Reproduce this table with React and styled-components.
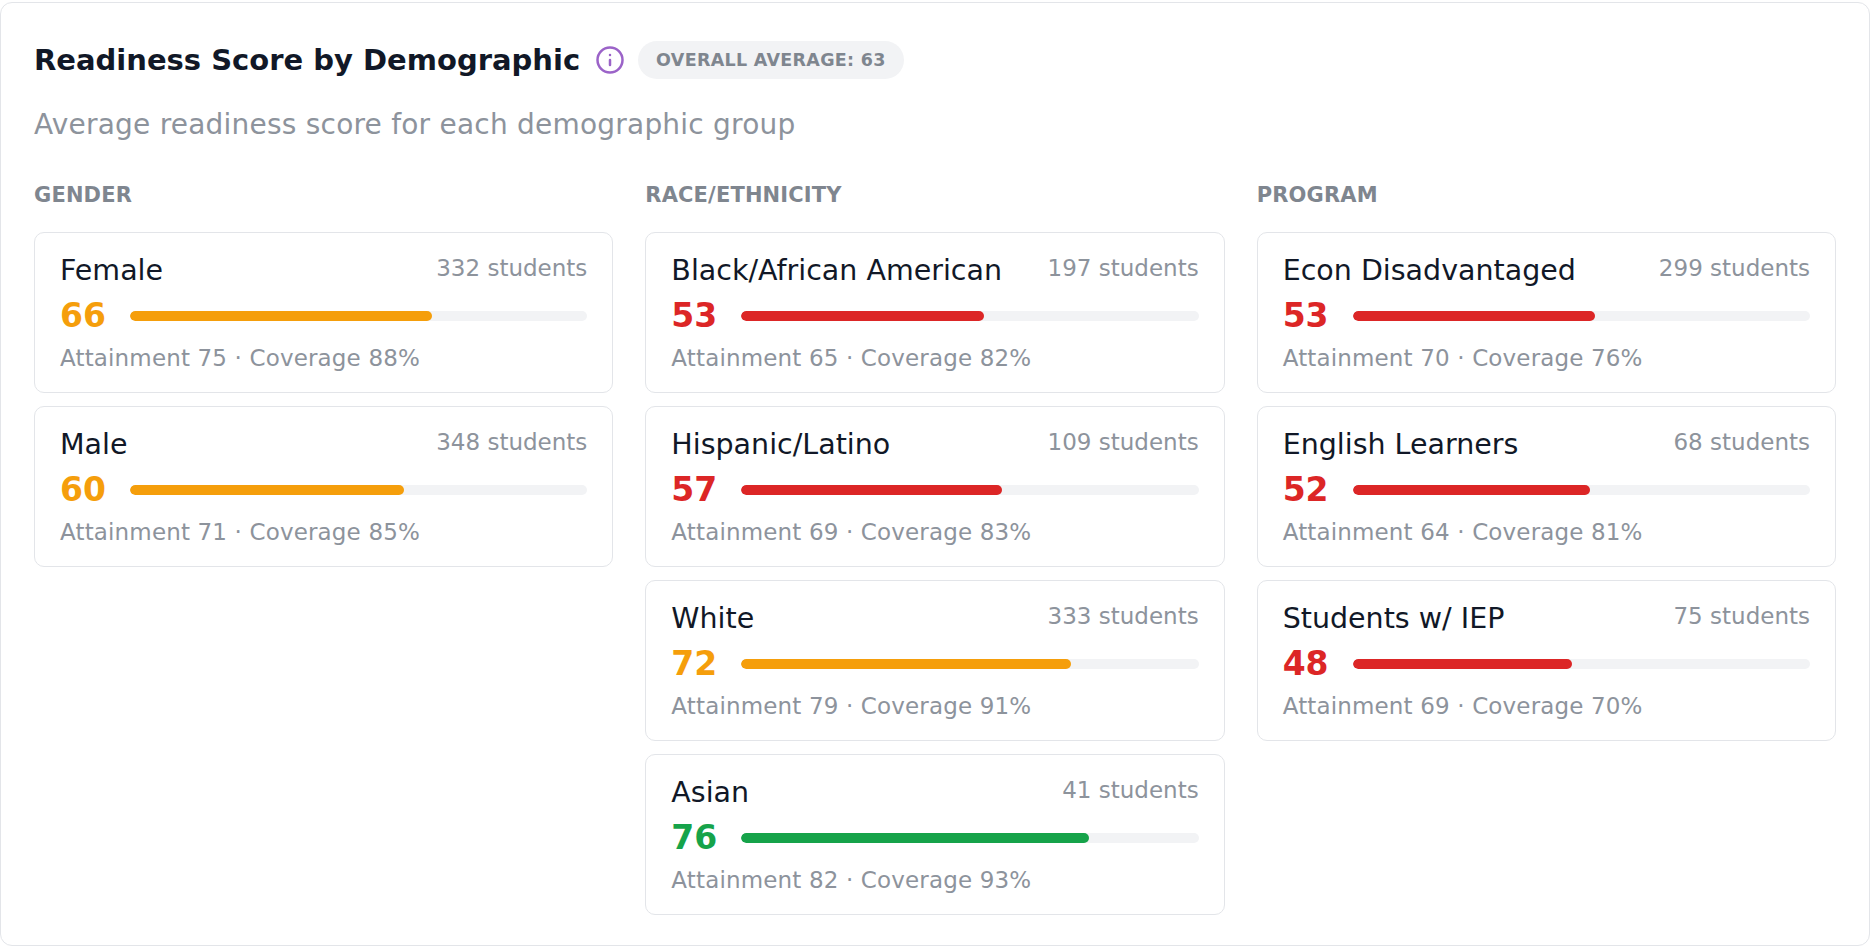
import React from "react";
import styled, { createGlobalStyle } from "styled-components";

const GlobalStyle = createGlobalStyle`
  html, body {
    margin: 0;
    padding: 0;
    background: #ffffff;
  }
  body {
    font-family: "DejaVu Sans", "Noto Sans", sans-serif;
    -webkit-font-smoothing: antialiased;
  }
  * { box-sizing: border-box; }
`;

const Page = styled.div`
  padding: 2px 2px 2px 0;
`;

const Panel = styled.section`
  background: #ffffff;
  border: 1px solid #e3e5e9;
  border-radius: 12px;
  padding: 37px 33px 30px 33px;
`;

const HeaderRow = styled.div`
  display: flex;
  align-items: center;
  height: 40px;
`;

const Title = styled.h2`
  margin: 0;
  font-size: 29px;
  line-height: 40px;
  font-weight: 700;
  color: #111827;
  letter-spacing: 0;
`;

const InfoIcon = styled.svg`
  width: 30px;
  height: 30px;
  margin-left: 15px;
  flex-shrink: 0;
  color: #9b63c8;
`;

const Badge = styled.span`
  margin-left: 13px;
  height: 38px;
  display: inline-flex;
  align-items: center;
  padding: 0 18px;
  border-radius: 999px;
  background: #f2f3f5;
  color: #7f868f;
  font-size: 17.5px;
  font-weight: 700;
  letter-spacing: 0.3px;
  text-transform: uppercase;
  white-space: nowrap;
`;

const Subtitle = styled.p`
  margin: 27px 0 0 0;
  font-size: 28px;
  line-height: 36px;
  letter-spacing: 0.22px;
  color: #8d939c;
`;

const Columns = styled.div`
  margin-top: 39px;
  display: grid;
  grid-template-columns: repeat(3, 1fr);
  column-gap: 32px;
  align-items: start;
`;

const Column = styled.div`
  display: flex;
  flex-direction: column;
`;

const ColumnTitle = styled.h3`
  margin: 0 0 24px 0;
  font-size: 21px;
  line-height: 26px;
  font-weight: 700;
  color: #7f868f;
  letter-spacing: 0.15px;
  text-transform: uppercase;
`;

const CardList = styled.div`
  display: flex;
  flex-direction: column;
  gap: 13px;
`;

const Card = styled.div`
  border: 1px solid #e3e5e9;
  border-radius: 10px;
  padding: 21px 25px 20px 25px;
  background: #ffffff;
`;

const CardTop = styled.div`
  display: flex;
  justify-content: space-between;
  align-items: flex-start;
`;

const GroupName = styled.span`
  font-size: 28.5px;
  line-height: 34px;
  font-weight: 500;
  color: #111827;
  white-space: nowrap;
`;

const Count = styled.span`
  font-size: 23px;
  line-height: 28px;
  color: #8d939c;
  white-space: nowrap;
`;

const ScoreRow = styled.div`
  margin-top: 9px;
  display: flex;
  align-items: center;
`;

const Score = styled.span`
  font-size: 33px;
  line-height: 38px;
  font-weight: 700;
  color: ${(p) => p.$color};
`;

const Track = styled.div`
  flex: 1;
  margin-left: 24px;
  height: 10px;
  border-radius: 5px;
  background: #f2f3f5;
  overflow: hidden;
`;

const Fill = styled.div`
  height: 100%;
  border-radius: 5px;
  background: ${(p) => p.$color};
`;

const Details = styled.div`
  margin-top: 9px;
  font-size: 23px;
  line-height: 28px;
  letter-spacing: 0.15px;
  color: #8d939c;
  white-space: nowrap;
`;

const colorFor = (score) =>
  score >= 75 ? "#16a34a" : score >= 60 ? "#f59e0b" : "#dc2626";

const groups = [
  {
    title: "Gender",
    items: [
      { name: "Female", students: 332, score: 66, attainment: 75, coverage: 88 },
      { name: "Male", students: 348, score: 60, attainment: 71, coverage: 85 },
    ],
  },
  {
    title: "Race/Ethnicity",
    items: [
      { name: "Black/African American", students: 197, score: 53, attainment: 65, coverage: 82 },
      { name: "Hispanic/Latino", students: 109, score: 57, attainment: 69, coverage: 83 },
      { name: "White", students: 333, score: 72, attainment: 79, coverage: 91 },
      { name: "Asian", students: 41, score: 76, attainment: 82, coverage: 93 },
    ],
  },
  {
    title: "Program",
    items: [
      { name: "Econ Disadvantaged", students: 299, score: 53, attainment: 70, coverage: 76 },
      { name: "English Learners", students: 68, score: 52, attainment: 64, coverage: 81 },
      { name: "Students w/ IEP", students: 75, score: 48, attainment: 69, coverage: 70 },
    ],
  },
];

function GroupCard({ item }) {
  const color = colorFor(item.score);
  return (
    <Card>
      <CardTop>
        <GroupName>{item.name}</GroupName>
        <Count>{item.students} students</Count>
      </CardTop>
      <ScoreRow>
        <Score $color={color}>{item.score}</Score>
        <Track>
          <Fill $color={color} style={{ width: `${item.score}%` }} />
        </Track>
      </ScoreRow>
      <Details>
        Attainment {item.attainment} · Coverage {item.coverage}%
      </Details>
    </Card>
  );
}

export default function App() {
  return (
    <>
      <GlobalStyle />
      <Page>
        <Panel>
          <HeaderRow>
            <Title>Readiness Score by Demographic</Title>
            <InfoIcon viewBox="0 0 24 24" fill="none" stroke="currentColor" strokeWidth="2" strokeLinecap="round" strokeLinejoin="round">
              <circle cx="12" cy="12" r="10" />
              <path d="M12 16v-4" />
              <path d="M12 8h.01" />
            </InfoIcon>
            <Badge>Overall Average: 63</Badge>
          </HeaderRow>
          <Subtitle>Average readiness score for each demographic group</Subtitle>
          <Columns>
            {groups.map((g) => (
              <Column key={g.title}>
                <ColumnTitle>{g.title}</ColumnTitle>
                <CardList>
                  {g.items.map((item) => (
                    <GroupCard key={item.name} item={item} />
                  ))}
                </CardList>
              </Column>
            ))}
          </Columns>
        </Panel>
      </Page>
    </>
  );
}
